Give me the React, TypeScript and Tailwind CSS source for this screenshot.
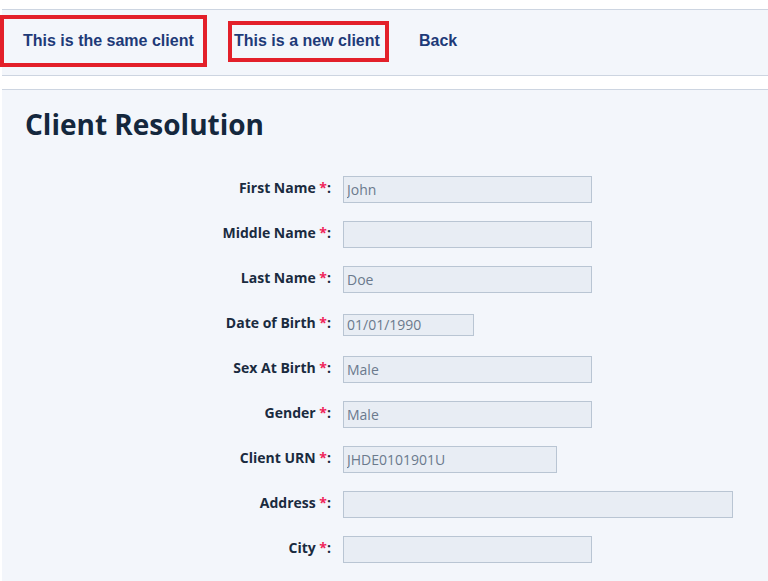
import React from 'react';

type Field = {
  label: string;
  value: string;
  width: string;
  height?: string;
};

const fields: Field[] = [
  { label: 'First Name', value: 'John', width: 'w-[249px]' },
  { label: 'Middle Name', value: '', width: 'w-[249px]' },
  { label: 'Last Name', value: 'Doe', width: 'w-[249px]' },
  { label: 'Date of Birth', value: '01/01/1990', width: 'w-[131px]', height: 'h-[22px]' },
  { label: 'Sex At Birth', value: 'Male', width: 'w-[249px]' },
  { label: 'Gender', value: 'Male', width: 'w-[249px]' },
  { label: 'Client URN', value: 'JHDE0101901U', width: 'w-[214px]' },
  { label: 'Address', value: '', width: 'w-[390px]' },
  { label: 'City', value: '', width: 'w-[249px]' },
];

export default function App() {
  return (
    <div className="min-h-screen bg-white pt-[9px] font-['Open_Sans',sans-serif]">
      {/* action bar */}
      <div className="relative ml-[2px] flex h-[67px] items-center border-y border-[#cdd5e1] bg-[#f3f6fb] font-['Liberation_Sans',Arial,sans-serif] text-[16px] font-bold text-[#1e3a78]">
        <button
          type="button"
          className="ml-[-2px] mt-[-3px] flex h-[52px] w-[207px] items-center border-[4px] border-[#e3202a] pl-[19px]"
        >
          This is the same client
        </button>
        <button
          type="button"
          className="ml-[21px] mt-[-3px] flex h-[41px] w-[161px] items-center border-[4px] border-[#e3202a] pl-[2px]"
        >
          This is a new client
        </button>
        <button type="button" className="ml-[30px] mt-[-3px]">
          Back
        </button>
      </div>

      <div className="mt-[13px] ml-[2px] min-h-[492px] border-t border-[#cdd5e1] bg-[#f3f6fb] pl-[23px] pt-[14px]">
        <h1 className="text-[28px] font-bold leading-[40px] text-[#14273d]">Client Resolution</h1>

        <form className="mt-[32px] flex flex-col gap-[18px]">
          {fields.map((f) => (
            <div key={f.label} className="flex h-[27px] items-center">
              <label className="mt-[-4px] w-[318px] pr-[12px] text-right text-[14px] font-bold text-[#1a2b3f]">
                {f.label} <span className="text-[#f0245a]">*</span>:
              </label>
              <input
                type="text"
                readOnly
                value={f.value}
                className={`${f.width} ${f.height ?? 'h-[27px]'} border border-[#b9c5d3] bg-[#e8edf4] px-[3px] text-[14px] text-[#6b7a8d] outline-none`}
              />
            </div>
          ))}
        </form>
      </div>
    </div>
  );
}
